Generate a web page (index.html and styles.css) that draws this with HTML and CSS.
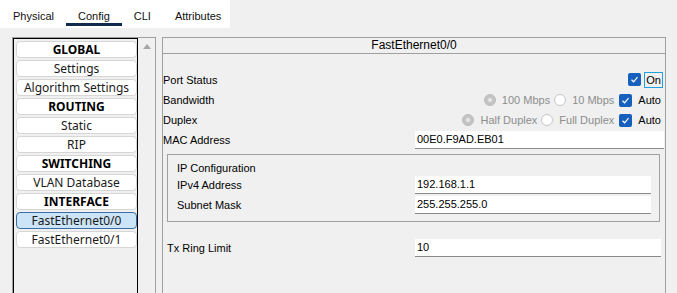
FILE: index.html
```html
<!DOCTYPE html>
<html>
<head>
    <title>Router - Config</title>
    <meta charset="UTF-8">
    <meta name="viewport" content="width=device-width, initial-scale=1.0">
    <link rel="stylesheet" href="styles.css">
</head>
<body>
    <div class="tabs">
        <div class="tab">Physical</div>
        <div class="tab active">Config</div>
        <div class="tab">CLI</div>
        <div class="tab">Attributes</div>
    </div>

    <div class="main">
        <div class="list-pane">
            <div class="list">
                <div class="item head">GLOBAL</div>
                <div class="item">Settings</div>
                <div class="item">Algorithm Settings</div>
                <div class="item head">ROUTING</div>
                <div class="item">Static</div>
                <div class="item">RIP</div>
                <div class="item head">SWITCHING</div>
                <div class="item">VLAN Database</div>
                <div class="item head">INTERFACE</div>
                <div class="item selected">FastEthernet0/0</div>
                <div class="item">FastEthernet0/1</div>
            </div>
            <div class="scrollbar">
                <div class="arrow-up"></div>
            </div>
        </div>

        <div class="panel">
            <div class="panel-title">FastEthernet0/0</div>
            <div class="panel-body">
                <!-- Port status -->
                <div class="row row-port">
                    <span class="label">Port Status</span>
                    <div class="controls controls-port">
                        <span class="check"><svg width="13" height="13" viewBox="0 0 13 13"><polyline points="3.5,6.8 5.6,8.8 9.5,4.2" fill="none" stroke="#fff" stroke-width="1.2"/></svg></span>
                        <span class="on-box">On</span>
                    </div>
                </div>

                <!-- Bandwidth -->
                <div class="row">
                    <span class="label">Bandwidth</span>
                    <div class="controls">
                        <span class="radio on"></span>
                        <span class="opt disabled">100 Mbps</span>
                        <span class="radio"></span>
                        <span class="opt disabled">10 Mbps</span>
                        <span class="check check-gap"><svg width="13" height="13" viewBox="0 0 13 13"><polyline points="3.5,6.8 5.6,8.8 9.5,4.2" fill="none" stroke="#fff" stroke-width="1.2"/></svg></span>
                        <span class="opt">Auto</span>
                    </div>
                </div>

                <!-- Duplex -->
                <div class="row">
                    <span class="label">Duplex</span>
                    <div class="controls">
                        <span class="radio on"></span>
                        <span class="opt disabled">Half Duplex</span>
                        <span class="radio"></span>
                        <span class="opt disabled">Full Duplex</span>
                        <span class="check check-gap"><svg width="13" height="13" viewBox="0 0 13 13"><polyline points="3.5,6.8 5.6,8.8 9.5,4.2" fill="none" stroke="#fff" stroke-width="1.2"/></svg></span>
                        <span class="opt">Auto</span>
                    </div>
                </div>

                <!-- MAC -->
                <div class="row field-row mac-row">
                    <span class="label">MAC Address</span>
                    <div class="field">00E0.F9AD.EB01</div>
                </div>

                <div class="group">
                    <div class="group-title">IP Configuration</div>
                    <div class="row field-row">
                        <span class="label">IPv4 Address</span>
                        <div class="field">192.168.1.1</div>
                    </div>
                    <div class="row field-row">
                        <span class="label">Subnet Mask</span>
                        <div class="field">255.255.255.0</div>
                    </div>
                </div>

                <div class="row field-row tx-row">
                    <span class="label">Tx Ring Limit</span>
                    <div class="field">10</div>
                </div>
            </div>
        </div>
    </div>
</body>
</html>
```

FILE: styles.css
```css
body {
    margin: 0;
    height: 293px;
    overflow: hidden;
    background-color: #f0f0f0;
    font-family: "Liberation Sans", Arial, sans-serif;
    font-size: 11px;
    color: #000;
}

/* top tabs */
.tabs {
    display: flex;
    width: 230px;
    height: 28px;
    padding-left: 1px;
    box-sizing: border-box;
    background: #fff;
}
.tab {
    height: 26px;
    padding: 9px 12px 0;
    box-sizing: border-box;
    line-height: 14px;
    color: #111;
}
.tab.active {
    border-bottom: 3px solid #102a4c;
}

.main {
    display: flex;
    align-items: flex-start;
    padding: 9px 0 0 12px;
}

/* left navigation list */
.list-pane {
    display: flex;
    width: 144px;
    height: 270px;
    border: 1px solid #a0a0a0;
    border-bottom: none;
    box-sizing: border-box;
}
.list {
    width: 125px;
    border: 1px solid #000;
    border-bottom: none;
    padding: 2px 0 0 2px;
    box-sizing: border-box;
}
.item {
    height: 17px;
    margin-bottom: 2px;
    box-sizing: border-box;
    border: 1px solid #d6d6d6;
    border-radius: 4px;
    background: #fff;
    text-align: center;
    font-family: "Noto Sans", sans-serif;
    font-size: 12px;
    line-height: 15px;
    color: #1a1a1a;
}
.item.head {
    font-weight: bold;
    color: #000;
}
.item.selected {
    background: #cce4f7;
    border-color: #3a6ea5;
}
.scrollbar {
    flex: 1;
}
.arrow-up {
    width: 0;
    height: 0;
    margin: 6px auto 0;
    border-left: 4px solid transparent;
    border-right: 4px solid transparent;
    border-bottom: 5px solid #a6a6a6;
}

/* right settings panel */
.panel {
    width: 504px;
    height: 270px;
    margin-left: 6px;
    border: 1px solid #a0a0a0;
    border-bottom: none;
    box-sizing: border-box;
}
.panel-title {
    height: 16px;
    box-sizing: border-box;
    border-bottom: 1px solid #a0a0a0;
    text-align: center;
    font-size: 12px;
    line-height: 15px;
}
.panel-body {
    padding-top: 15px;
}
.row {
    display: flex;
    align-items: center;
    justify-content: space-between;
    height: 20px;
}
.row-port {
    height: 21px;
}
.controls {
    display: flex;
    align-items: center;
    padding-right: 4px;
}
.controls-port {
    padding-right: 2px;
}
.check {
    display: flex;
    width: 13px;
    height: 13px;
    border-radius: 2px;
    background: #175fbd;
}
.check-gap {
    margin-left: 5px;
}
.on-box {
    height: 16px;
    margin-left: 3px;
    padding: 0 1px;
    box-sizing: border-box;
    border: 1px solid #1fa2dc;
    line-height: 14px;
}
.radio {
    width: 12px;
    height: 12px;
    margin-left: 4px;
    box-sizing: border-box;
    border: 1px solid #c6c6c6;
    border-radius: 50%;
    background: #fff;
}
.radio.on {
    display: flex;
    align-items: center;
    justify-content: center;
    background: #c4c4c4;
    border-color: #bcbcbc;
}
.radio.on::after {
    content: "";
    width: 4px;
    height: 4px;
    border-radius: 50%;
    background: #e8e8e8;
}
.opt {
    margin-left: 6px;
}
.opt.disabled {
    color: #8d8d8d;
}

/* text fields */
.field-row {
    justify-content: flex-start;
}
.field-row .label {
    flex: 0 0 252px;
}
.field {
    flex: 1;
    height: 18px;
    padding-left: 2px;
    box-sizing: border-box;
    border-bottom: 1px solid #8a8a8a;
    background: #fff;
    line-height: 17px;
}
.mac-row .field {
    margin-right: 1px;
}

.group {
    margin: 4px 5px 0 4px;
    padding: 5px 8px 5px 9px;
    border: 1px solid #a0a0a0;
}
.group-title {
    height: 16px;
    line-height: 16px;
}
.group .row {
    align-items: flex-start;
}
.group .row .label {
    flex-basis: 238px;
    line-height: 18px;
}

.tx-row {
    align-items: flex-start;
    margin-top: 17px;
    padding-left: 4px;
}
.tx-row .label {
    flex-basis: 248px;
    line-height: 18px;
}
.tx-row .field {
    margin-right: 4px;
}
```
